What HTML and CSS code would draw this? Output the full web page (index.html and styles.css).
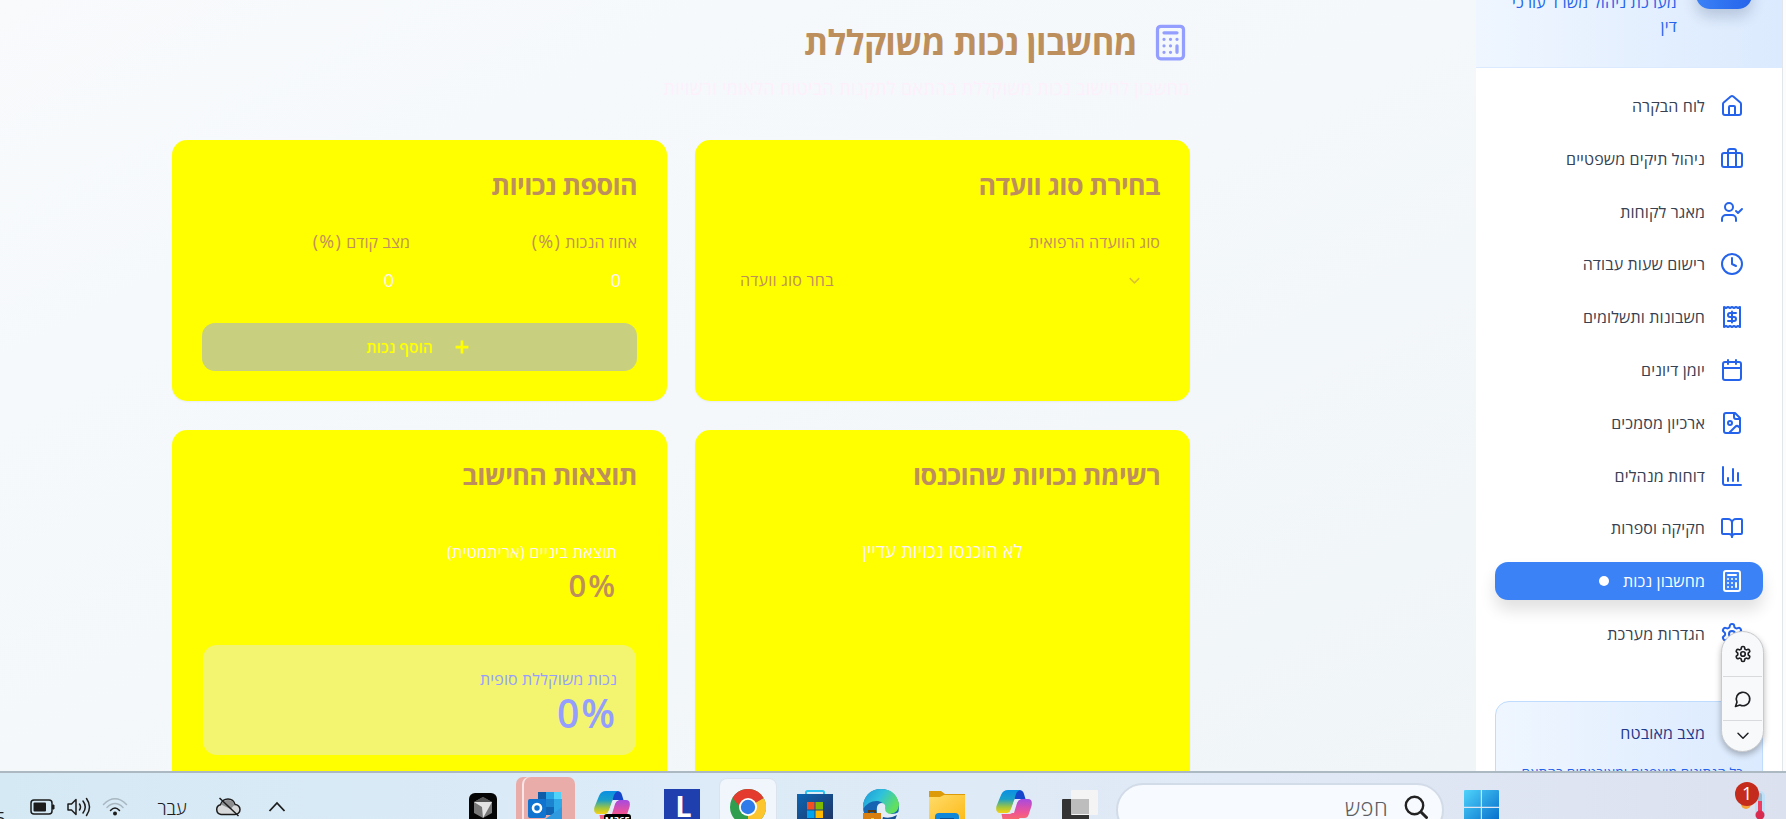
FILE: index.html
```html
<!DOCTYPE html>
<html lang="he" dir="rtl">
<head>
<meta charset="utf-8">
<title>מחשבון נכות משוקללת</title>
<link rel="stylesheet" href="styles.css">
</head>
<body>
<svg class="defs" aria-hidden="true">
  <defs>
    <symbol id="calc" viewBox="0 0 24 24"><rect x="4" y="2" width="16" height="20" rx="2"/><path d="M8 6h8M16 14v4M16 10h.01M12 10h.01M8 10h.01M12 14h.01M8 14h.01M12 18h.01M8 18h.01"/></symbol>
    <symbol id="gear" viewBox="0 0 24 24"><path d="M12.22 2h-.44a2 2 0 0 0-2 2v.18a2 2 0 0 1-1 1.73l-.43.25a2 2 0 0 1-2 0l-.15-.08a2 2 0 0 0-2.73.73l-.22.38a2 2 0 0 0 .73 2.73l.15.1a2 2 0 0 1 1 1.72v.51a2 2 0 0 1-1 1.74l-.15.09a2 2 0 0 0-.73 2.73l.22.38a2 2 0 0 0 2.73.73l.15-.08a2 2 0 0 1 2 0l.43.25a2 2 0 0 1 1 1.73V20a2 2 0 0 0 2 2h.44a2 2 0 0 0 2-2v-.18a2 2 0 0 1 1-1.73l.43-.25a2 2 0 0 1 2 0l.15.08a2 2 0 0 0 2.73-.73l.22-.39a2 2 0 0 0-.73-2.73l-.15-.08a2 2 0 0 1-1-1.74v-.5a2 2 0 0 1 1-1.74l.15-.09a2 2 0 0 0 .73-2.73l-.22-.38a2 2 0 0 0-2.73-.73l-.15.08a2 2 0 0 1-2 0l-.43-.25a2 2 0 0 1-1-1.73V4a2 2 0 0 0-2-2z"/><circle cx="12" cy="12" r="3"/></symbol>
    <linearGradient id="gWin" x1="0" y1="0" x2="1" y2="1"><stop offset="0" stop-color="#4fd3fb"/><stop offset="1" stop-color="#0067c8"/></linearGradient>
    <linearGradient id="gStore" x1="0" y1="0" x2="1" y2="1"><stop offset="0" stop-color="#0c66b4"/><stop offset="1" stop-color="#22305c"/></linearGradient>
    <linearGradient id="gFolder" x1="0" y1="0" x2="1" y2="1"><stop offset="0" stop-color="#ffdc6a"/><stop offset="1" stop-color="#fdb813"/></linearGradient>
    <linearGradient id="gEdge" x1="0" y1="0" x2="1" y2=".5"><stop offset="0" stop-color="#1c96d8"/><stop offset=".5" stop-color="#2fc2dc"/><stop offset="1" stop-color="#62e05c"/></linearGradient>
    <linearGradient id="gCopA" x1="0" y1="0" x2="0" y2="1"><stop offset="0" stop-color="#0a8fe4"/><stop offset=".4" stop-color="#1ba0c8"/><stop offset=".75" stop-color="#a5c63c"/><stop offset="1" stop-color="#f7d112"/></linearGradient>
    <linearGradient id="gCopB" x1="0" y1="0" x2="0" y2="1"><stop offset="0" stop-color="#a64be0"/><stop offset=".5" stop-color="#ee5397"/><stop offset="1" stop-color="#ff7a4c"/></linearGradient>
    <symbol id="copilot" viewBox="0 0 36 36">
      <path d="M17 1h6q4 0 5 4l1.500 5h-6q-3 0-4 3l-3-9z" fill="#1546cc"/>
      <path d="M12 1h12q-3 1-4 4l-5 16q-1 3-4 3H4q-5 0-3.500-7L5 6q2-5 7-5z" fill="url(#gCopA)"/>
      <path d="M25 10h7q5 0 3.500 7l-3 9q-1 3-4 3h-5q-3 7-7 7h-4q-5 0-6-6l-1-5h8q3 0 4-4l3-7q1-4 4.500-4z" fill="url(#gCopB)"/>
      <path d="M19 10h6q-3 1-4 4l-3 10h-6q2-1 3-4z" fill="#e4ecf8"/>
    </symbol>
  </defs>
</svg>

<div class="desktop">
  <div class="browser">
    <aside class="sidebar">
      <header class="brand">
        <div class="brand-logo"></div>
        <p class="brand-text">מערכת ניהול משרד עורכי<br>דין</p>
      </header>
      <nav class="menu">
        <a class="item"><svg class="ico" viewBox="0 0 24 24"><path d="M15 21v-8a1 1 0 0 0-1-1h-4a1 1 0 0 0-1 1v8"/><path d="M3 10a2 2 0 0 1 .709-1.528l7-5.999a2 2 0 0 1 2.582 0l7 5.999A2 2 0 0 1 21 10v9a2 2 0 0 1-2 2H5a2 2 0 0 1-2-2z"/></svg><span>לוח הבקרה</span></a>
        <a class="item"><svg class="ico" viewBox="0 0 24 24"><path d="M16 20V4a2 2 0 0 0-2-2h-4a2 2 0 0 0-2 2v16"/><rect x="2" y="6" width="20" height="14" rx="2"/></svg><span>ניהול תיקים משפטיים</span></a>
        <a class="item"><svg class="ico" viewBox="0 0 24 24"><path d="m16 11 2 2 4-4"/><path d="M16 21v-2a4 4 0 0 0-4-4H6a4 4 0 0 0-4 4v2"/><circle cx="9" cy="7" r="4"/></svg><span>מאגר לקוחות</span></a>
        <a class="item"><svg class="ico" viewBox="0 0 24 24"><circle cx="12" cy="12" r="10"/><path d="M12 6v6l4 2"/></svg><span>רישום שעות עבודה</span></a>
        <a class="item"><svg class="ico" viewBox="0 0 24 24"><path d="M4 2v20l2-1 2 1 2-1 2 1 2-1 2 1 2-1 2 1V2l-2 1-2-1-2 1-2-1-2 1-2-1-2 1Z"/><path d="M16 8h-6a2 2 0 1 0 0 4h4a2 2 0 1 1 0 4H8"/><path d="M12 17.500v-11"/></svg><span>חשבונות ותשלומים</span></a>
        <a class="item"><svg class="ico" viewBox="0 0 24 24"><path d="M8 2v4M16 2v4"/><rect x="3" y="4" width="18" height="18" rx="2"/><path d="M3 10h18"/></svg><span>יומן דיונים</span></a>
        <a class="item"><svg class="ico" viewBox="0 0 24 24"><path d="M15 2H6a2 2 0 0 0-2 2v16a2 2 0 0 0 2 2h12a2 2 0 0 0 2-2V7Z"/><path d="M14 2v4a2 2 0 0 0 2 2h4"/><circle cx="10" cy="12" r="2"/><path d="m20 17-1.296-1.296a2.410 2.410 0 0 0-3.408 0L9 22"/></svg><span>ארכיון מסמכים</span></a>
        <a class="item"><svg class="ico" viewBox="0 0 24 24"><path d="M3 3v16a2 2 0 0 0 2 2h16"/><path d="M18 17V9M13 17V5M8 17v-3"/></svg><span>דוחות מנהלים</span></a>
        <a class="item"><svg class="ico" viewBox="0 0 24 24"><path d="M12 7v14"/><path d="M3 18a1 1 0 0 1-1-1V4a1 1 0 0 1 1-1h5a4 4 0 0 1 4 4 4 4 0 0 1 4-4h5a1 1 0 0 1 1 1v13a1 1 0 0 1-1 1h-6a3 3 0 0 0-3 3 3 3 0 0 0-3-3z"/></svg><span>חקיקה וספרות</span></a>
        <a class="item active"><svg class="ico"><use href="#calc"/></svg><span>מחשבון נכות</span><i class="dot"></i></a>
        <a class="item"><svg class="ico"><use href="#gear"/></svg><span>הגדרות מערכת</span></a>
      </nav>
      <section class="secure">
        <h4>מצב מאובטח</h4>
        <p>כל הנתונים מוצפנים ומאובטחים בהתאם</p>
      </section>
      <div class="toolbar">
        <div class="tool"><svg class="tico"><use href="#gear"/></svg></div>
        <div class="tool"><svg class="tico" viewBox="0 0 24 24"><path d="M7.900 20A9 9 0 1 0 4 16.100L2 22Z"/></svg></div>
        <div class="tool last"><svg class="tico" viewBox="0 0 24 24"><path d="m4.500 8 7.500 7.500L19.500 8"/></svg></div>
      </div>
    </aside>

    <main class="main">
      <div class="title"><svg class="title-ico"><use href="#calc"/></svg><h1>מחשבון נכות משוקללת</h1></div>
      <p class="subtitle">מחשבון לחישוב נכות משוקללת בהתאם לתקנות הביטוח הלאומי ורשויות</p>
      <div class="grid">
        <section class="card">
          <h2>בחירת סוג וועדה</h2>
          <label>סוג הוועדה הרפואית</label>
          <div class="select"><svg class="chev" viewBox="0 0 24 24"><path d="m6 9 6 6 6-6"/></svg><span>בחר סוג וועדה</span></div>
        </section>
        <section class="card">
          <h2>הוספת נכויות</h2>
          <div class="fields">
            <div><label>אחוז הנכות <span class="unit">(%)</span></label><div class="num">0</div></div>
            <div><label>מצב קודם <span class="unit">(%)</span></label><div class="num">0</div></div>
          </div>
          <div class="add"><svg class="plus" viewBox="0 0 24 24"><path d="M5 12h14M12 5v14"/></svg><span>הוסף נכות</span></div>
        </section>
        <section class="card tall">
          <h2>רשימת נכויות שהוכנסו</h2>
          <p class="empty">לא הוכנסו נכויות עדיין</p>
        </section>
        <section class="card tall">
          <h2>תוצאות החישוב</h2>
          <div class="result"><p class="cap mid">תוצאת ביניים (אריתמטית)</p><p class="val" dir="ltr">0%</p></div>
          <div class="result final"><p class="cap">נכות משוקללת סופית</p><p class="val" dir="ltr">0%</p></div>
        </section>
      </div>
    </main>
  </div>

  <footer class="taskbar" dir="ltr">
    <div class="tray">
      <span class="clock">5</span>
      <svg class="t-bat" viewBox="0 0 26 18"><rect x="1" y="2" width="21" height="14" rx="3" fill="none" stroke="#1c1c1c" stroke-width="1.500"/><rect x="3.500" y="4.500" width="12.500" height="9" rx="1" fill="#1c1c1c"/><path d="M22.500 7h1.500v4h-1.500z" fill="#1c1c1c" stroke="#1c1c1c"/></svg>
      <svg class="t-vol" viewBox="0 0 26 20" fill="none" stroke="#1c1c1c" stroke-width="1.500" stroke-linecap="round" stroke-linejoin="round"><path d="M2 7h3.500L10 2.500v15L5.500 13H2zM13.500 7q2 3 0 6M17 4q4.500 6 0 12M20.500 1.500q6 8.500 0 17"/></svg>
      <svg class="t-wifi" viewBox="0 0 26 20" fill="none" stroke-width="1.500" stroke-linecap="round"><path d="M1.500 7.500Q13-4 24.500 7.500M5 10.500q8-8 16 0" stroke="#a9b7c0"/><path d="M8.500 13.500q4.500-5 9 0" stroke="#1c1c1c"/><circle cx="13" cy="16.500" r="2" fill="#1c1c1c"/></svg>
      <span class="lang">עבר</span>
      <svg class="t-cloud" viewBox="0 0 26 20"><path d="M6 17.500a5 5 0 0 1-.5-9.800Q7.500 2 13 2t7 5.500a5 5 0 0 1 0 10z" fill="#d6d8da" stroke="#1c1c1c" stroke-width="1.500"/><path d="M6 7.500Q8 3 13 3t6.500 5l-4 4z" fill="#8c8e90"/><path d="m4.500 1 19 18" stroke="#1c1c1c" stroke-width="1.500"/></svg>
      <svg class="t-up" viewBox="0 0 18 12"><path d="m1.500 10 7.500-8 7.500 8" fill="none" stroke="#1c1c1c" stroke-width="1.800"/></svg>
    </div>
    <div class="apps">
      <div class="app"><svg class="a" viewBox="0 0 36 36"><rect x="4" y="4" width="28" height="32" rx="6" fill="#050505"/><path d="m18 8 9 5v11l-9 5-9-5V13z" fill="#777"/><path d="m9 13 18 0-9 16-1-11z" fill="#e4e4e4"/><path d="m18 8 9 5H9z" fill="#555"/></svg></div>
      <div class="app hot"><svg class="a" viewBox="0 0 36 36"><path d="M11 3h23v23H11z" fill="#1066b5"/><path d="M11 3h8v7h-8z" fill="#0f5ca8"/><path d="M19 3h15v7H19z" fill="#28a3e6"/><path d="M27 3h7v7h-7z" fill="#50d3fb"/><path d="M19 10h8v8h-8z" fill="#1b83cf"/><path d="M27 10h8v14h-8z" fill="#2fa8e8"/><path d="m10 36 25-18v18z" fill="#2f9ae0"/><rect x="1" y="10" width="18" height="19" rx="2" fill="#0f73cf"/><circle cx="10" cy="19" r="4" fill="none" stroke="#fff" stroke-width="2.600"/></svg></div>
      <div class="app shifted"><svg class="a"><use href="#copilot" x="0" y="1"/></svg><b class="m365">M365</b></div>
      <div class="app"><span class="l-app">L</span></div>
      <div class="app current"><svg class="a" viewBox="0 0 36 36"><circle cx="18" cy="18" r="18" fill="#2f9e4f"/><path d="M18 18 33.600 9A18 18 0 0 1 18 36z" fill="#fdc52d"/><path d="M18 18H10.200L2.400 9A18 18 0 0 1 33.600 9z" fill="#e33b2e"/><circle cx="18" cy="18" r="9" fill="#fff"/><circle cx="18" cy="18" r="7.200" fill="#2f7bea"/></svg></div>
      <div class="app"><svg class="a" viewBox="0 0 36 36"><path d="M9 7V3.500Q9 2 10.500 2h15Q27 2 27 3.500V7" fill="none" stroke="#2fc3f3" stroke-width="2"/><path d="M0 5h36v31H0z" fill="url(#gStore)"/><path d="M10 13h7.500v7.500H10z" fill="#f25022"/><path d="M18.500 13H26v7.500h-7.500z" fill="#7fba00"/><path d="M10 21.500h7.500V29H10z" fill="#00a4ef"/><path d="M18.500 21.500H26V29h-7.500z" fill="#ffb900"/></svg></div>
      <div class="app"><svg class="a" viewBox="0 0 36 36"><circle cx="18" cy="18" r="18" fill="#1565b2"/><path d="M0 16Q3 0 18 0t18 15q0 9-9 10-7 0-6-5 1-7-6-8Q6 11 0 20z" fill="url(#gEdge)"/><path d="M14 18q1-4 5-4 4 1 3 5 0 6 7 6 4 0 7-2v13H18q-5-8-4-18z" fill="#e3ecf7"/><path d="M20 28q7 2 14-2l-4 10H18z" fill="#174f91"/><path d="M0 24h18v12H0z" fill="#d87f10"/><path d="M6 24v-2h6v2" fill="none" stroke="#5b3a10" stroke-width="2"/><path d="M8 29h3v3H8z" fill="#ffd33d"/></svg></div>
      <div class="app"><svg class="a" viewBox="0 0 36 36"><path d="M0 2h12l4 3h20v6H0z" fill="#dd9b09"/><path d="M0 8h11l4-2h21v30H0z" fill="url(#gFolder)"/><rect x="6" y="24" width="24" height="14" rx="4" fill="#0f86d8"/><path d="M11 29h14v3H11z" fill="#0c4f92"/></svg></div>
      <div class="app"><svg class="a"><use href="#copilot"/></svg></div>
      <div class="app"><svg class="a" viewBox="0 0 36 36"><rect x="0" y="10" width="27" height="26" rx="1" fill="#333"/><rect x="9" y="1" width="27" height="25" rx="1" fill="#f4f4f4"/><path d="M9 10h18v15H9z" fill="#bdbdbd"/></svg></div>
    </div>
    <div class="search"><span>חפש</span><svg class="mag" viewBox="0 0 24 24"><circle cx="10.500" cy="10.500" r="8.700" fill="none" stroke="#222" stroke-width="2.400"/><path d="m17 17 5.500 5.500" stroke="#222" stroke-width="3" stroke-linecap="round"/></svg></div>
    <svg class="win" viewBox="0 0 35 35"><path d="M0 1q0-1 1-1h15.800v16.800H0zM17.900 0H34q1 0 1 1v15.800H17.900zM0 17.900h16.800V35H0zM17.900 17.900H35V35H17.900z" fill="url(#gWin)"/></svg>
    <div class="weather">
      <svg class="w-ico" viewBox="0 0 32 30"><circle cx="12" cy="14" r="5" fill="#f6a13c"/><rect x="21" y="1" width="10" height="29" rx="5" fill="#bfe0f7"/><rect x="24" y="3" width="4" height="22" rx="2" fill="#9db7cc"/><path d="M24 11h4v12h-4z" fill="#ef3d62"/><circle cx="26" cy="25" r="4.500" fill="#d92a50"/></svg>
      <span class="badge">1</span>
    </div>
  </footer>
</div>
</body>
</html>
```
FILE: styles.css
```css
* { box-sizing: border-box; }
body { margin: 0; font-family: "Open Sans", "Noto Sans", "DejaVu Sans", sans-serif; overflow: hidden; }
h1, h2, h4, p { margin: 0; }
.defs { position: absolute; width: 0; height: 0; }
.desktop { width: 1786px; height: 819px; display: flex; flex-direction: column; overflow: hidden; }
.browser { height: 771px; display: flex; overflow: hidden; padding-right: 3px; background: #fcfcfd; flex: none; }

/* sidebar */
.sidebar { position: relative; width: 307px; flex: none; background: #fff; border-right: 1px solid #e2e5ea; overflow: hidden; }
.brand { height: 68px; display: flex; gap: 19px; padding-right: 30px; border-bottom: 1px solid #dbeafe; background: linear-gradient(to left, #dbeafe, #eff6ff); }
.brand-logo { width: 56px; height: 56px; margin-top: -47px; border-radius: 14px; background: linear-gradient(to right, #3b82f6, #2563eb); box-shadow: 0 8px 14px rgba(30, 50, 90, .2); flex: none; }
.brand-text { margin-top: -10px; font-size: 16px; letter-spacing: .2px; line-height: 24px; color: #2563eb; white-space: nowrap; }
.menu { display: flex; flex-direction: column; gap: 14.800px; padding: 19px 19px 0; }
.item { height: 38px; display: flex; align-items: center; padding: 0 19px; border-radius: 13px; font-size: 16px; letter-spacing: .12px; color: #374151; white-space: nowrap; }
.ico { width: 24px; height: 24px; margin-left: 15px; flex: none; fill: none; stroke: #2563eb; stroke-width: 2; stroke-linecap: round; stroke-linejoin: round; }
.active { background: #3b82f6; color: #fff; box-shadow: 0 10px 16px rgba(0, 0, 0, .12); }
.active .ico { stroke: #fff; }
.dot { width: 10px; height: 10px; margin-right: 14px; border-radius: 50%; background: #fff; }
.secure { height: 120px; margin: 48px 19px 0; padding: 18px 19px; border: 1px solid #bfdbfe; border-radius: 14px; background: linear-gradient(to left, #dbeafe, #eff6ff); white-space: nowrap; }
.secure h4 { padding-right: 38px; font-size: 16px; font-weight: 400; letter-spacing: .15px; line-height: 27px; color: #1e3a8a; }
.secure p { margin-top: 14px; font-size: 13.800px; letter-spacing: .05px; line-height: 24px; color: #2563eb; }
.toolbar { position: absolute; left: 245px; top: 631px; width: 43px; height: 121px; display: flex; flex-direction: column; border: 1px solid #c8cacd; border-radius: 22px; background: #f8f9fb; box-shadow: 0 3px 6px rgba(0, 0, 0, .28); }
.tool { height: 44.500px; margin: 0 1px; padding-top: 1px; display: flex; align-items: center; justify-content: center; border-bottom: 1px solid #d8dadd; }
.tool.last { height: 29px; padding: 0; border: 0; }
.tico { width: 18px; height: 18px; fill: none; stroke: #1d1f22; stroke-width: 2.200; stroke-linecap: round; stroke-linejoin: round; }
.last .tico { width: 16px; }

/* calculator page */
.main { flex: 1; padding: 19px 286px 0 172px; background: linear-gradient(to top left, #f0f5f8, #f4f8fb 50%, #f8fafc); overflow: hidden; }
.title { height: 46px; display: flex; align-items: center; gap: 14px; color: #bd8f5c; }
.title-ico { width: 39px; height: 39px; flex: none; fill: none; stroke: #939eff; stroke-width: 2; stroke-linecap: round; stroke-linejoin: round; }
.title h1 { font-size: 34.500px; letter-spacing: -.6px; line-height: 46px; white-space: nowrap; }
.subtitle { margin-top: 10px; font-size: 18px; letter-spacing: .35px; font-weight: 500; line-height: 26px; color: #fdf0fc; white-space: nowrap; }
.grid { display: grid; grid-template-columns: 495px 495px; grid-template-rows: 260px 400px; gap: 30px 28px; margin-top: 39px; }
.card { height: 261px; padding: 25px 30px; border-radius: 15px; background: #ff0; color: #bd8f5c; box-shadow: 0 1px 2px rgba(0, 0, 0, .05); }
.card.tall { height: 400px; }
.card h2 { font-size: 26.800px; letter-spacing: -.6px; line-height: 40px; white-space: nowrap; }
label { display: block; margin-top: 24px; font-size: 16px; letter-spacing: .1px; line-height: 26px; }
.unit { font-size: 18px; line-height: 20px; letter-spacing: 1.200px; }
.select { display: flex; justify-content: space-between; align-items: center; height: 50px; padding: 0 16px 0 15px; font-size: 16px; letter-spacing: .25px; }
.chev { width: 19px; height: 19px; fill: none; stroke: #dcc330; stroke-width: 2; }
.fields { display: grid; grid-template-columns: 208px 208px; gap: 19px; }
.num { padding-right: 16px; font-size: 18.500px; line-height: 49px; font-weight: 500; color: #fff2ff; }
.add { display: flex; align-items: center; justify-content: center; gap: 18px; height: 48px; margin-top: 19px; border-radius: 13px; background: #c8d080; color: #ff0; font-size: 15.500px; font-weight: 600; }
.plus { width: 22px; height: 22px; fill: none; stroke: #ff0; stroke-width: 3; }
.empty { margin-top: 42px; text-align: center; font-size: 18px; letter-spacing: .25px; font-weight: 500; line-height: 28px; color: #fff2ff; }
.result { height: 110px; margin: 23px 1px 0; padding: 19px; border-radius: 14px; color: #bd8f5c; text-align: right; }
.cap { font-size: 16px; letter-spacing: .12px; line-height: 30px; }
.mid { letter-spacing: .32px; font-weight: 500; color: #fff2ff; }
.val { font-size: 31px; font-weight: 600; letter-spacing: 2px; line-height: 36px; }
.final { margin-top: 17px; padding-top: 19px; background: #f3f570; color: #939eff; }
.final .val { font-size: 39px; line-height: 38px; }

/* taskbar */
.taskbar { position: relative; height: 48px; flex: none; display: flex; align-items: flex-start; border-top: 2px solid #adb9c2; background: linear-gradient(to right, #d5e9f5, #dcebf7 40%, #e1e9f6 70%, #dce1ef); overflow: hidden; }
.tray { width: 455px; height: 68px; display: flex; align-items: center; flex: none; color: #1c1c1c; }
.clock { width: 31px; margin-left: -4px; margin-top: 22px; font-size: 16px; flex: none; }
.t-bat { width: 26px; height: 18px; margin-left: 3px; }
.t-vol { width: 26px; height: 20px; margin-left: 10px; }
.t-wifi { width: 26px; height: 20px; margin-left: 10px; }
.lang { width: 34px; margin-left: 27px; font-size: 18.500px; font-weight: 300; text-align: center; white-space: nowrap; }
.t-cloud { width: 26px; height: 20px; margin-left: 26px; }
.t-up { width: 18px; height: 12px; margin-left: 27px; }
.apps { display: flex; gap: 10.350px; padding-top: 6px; flex: none; }
.app { position: relative; width: 56px; height: 62px; display: flex; justify-content: center; padding-top: 10px; border-radius: 7px; }
.a { width: 36px; height: 36px; }
.hot { width: 51px; margin: -2px 2px 0 3px; padding: 12px 9px 0 0; background: #eaaca9; box-shadow: -2px 0 0 #f7e6e8, -8px 0 0 #eaaca9; }
.shifted { margin: 0 4px 0 -4px; }
.current { background: #f1f6fd; box-shadow: 0 0 0 1px #dbe3ee; }
.m365 { position: absolute; left: 20px; top: 35px; padding: 0 1px; border-radius: 3px; background: #000; color: #fff; font-size: 9.500px; line-height: 12px; }
.l-app { width: 36px; height: 36px; background: #1f3fae; color: #fff; font-weight: 700; font-size: 29px; line-height: 33px; padding-left: 3px; text-align: center; }
.search { width: 328px; height: 54px; margin: 10px 0 0 8px; display: flex; align-items: center; justify-content: flex-end; gap: 16px; padding: 0 14px 6px; border: 2px solid #d2dbe8; border-radius: 27px; background: #f7fafe; font-size: 22px; color: #5c5f63; flex: none; }
.search span { font-weight: 300; letter-spacing: .5px; }
.mag { width: 24px; height: 24px; }
.win { width: 35px; height: 35px; margin: 17px 0 0 20px; flex: none; }
.weather { position: relative; width: 36px; margin: 17px 0 0 235px; flex: none; }
.w-ico { width: 32px; height: 30px; }
.badge { position: absolute; left: 1px; top: -8px; width: 24px; height: 24px; border-radius: 50%; background: #c42b1c; color: #fff; font-size: 18px; line-height: 23px; text-align: center; }
```
